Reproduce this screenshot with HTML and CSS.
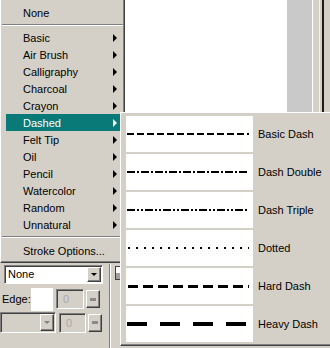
FILE: index.html
```html
<!DOCTYPE html>
<html lang="en">

<head>
  <meta charset="UTF-8">
  <meta name="viewport" content="width=device-width, initial-scale=1.0">
  <title>Stroke menu</title>
  <link rel="stylesheet" href="styles.css">
</head>

<body>
  <div class="screen">
    <div class="stage">
      <div class="stage-left"></div>
      <div class="canvas"></div>
      <div class="pasteboard"></div>
      <div class="rail">
        <span class="rail-edge"></span>
        <span class="rail-face"></span>
        <span class="rail-hi"></span>
        <span class="rail-gap"></span>
        <span class="rail-dark"></span>
        <span class="rail-face"></span>
      </div>
    </div>

    <div class="panel">
      <div class="controls">
        <div class="ctl-row row-fill">
          <div class="select fill-select">
            <span class="select-text">None</span>
            <span class="drop"></span>
          </div>
        </div>
        <div class="ctl-row row-edge">
          <span class="ctl-label">Edge:</span>
          <span class="swatch"></span>
          <span class="num">0</span>
          <span class="spin"></span>
        </div>
        <div class="ctl-row row-texture">
          <div class="select texture-select disabled">
            <span class="select-text"></span>
            <span class="drop"></span>
          </div>
          <span class="num">0</span>
          <span class="spin"></span>
        </div>
      </div>
      <div class="groove"></div>
      <div class="thumb"></div>
    </div>

    <!-- stroke category menu -->
    <ul class="menu main-menu">
      <li class="item">None</li>
      <li class="sep"></li>
      <li class="item has-sub">Basic</li>
      <li class="item has-sub">Air Brush</li>
      <li class="item has-sub">Calligraphy</li>
      <li class="item has-sub">Charcoal</li>
      <li class="item has-sub">Crayon</li>
      <li class="item has-sub active">Dashed</li>
      <li class="item has-sub">Felt Tip</li>
      <li class="item has-sub">Oil</li>
      <li class="item has-sub">Pencil</li>
      <li class="item has-sub">Watercolor</li>
      <li class="item has-sub">Random</li>
      <li class="item has-sub">Unnatural</li>
      <li class="sep sep-low"></li>
      <li class="item">Stroke Options...</li>
    </ul>

    <!-- dashed submenu -->
    <ul class="menu submenu">
      <li class="stroke">
        <svg class="preview" width="127" height="36" shape-rendering="crispEdges">
          <line x1="1" y1="18" x2="123" y2="18" stroke="#000" stroke-width="2" stroke-dasharray="7 3"/>
        </svg>
        <span class="stroke-name">Basic Dash</span>
      </li>
      <li class="stroke">
        <svg class="preview" width="127" height="36" shape-rendering="crispEdges">
          <line x1="1" y1="18" x2="123" y2="18" stroke="#000" stroke-width="2" stroke-dasharray="8 2 2 2"/>
        </svg>
        <span class="stroke-name">Dash Double</span>
      </li>
      <li class="stroke">
        <svg class="preview" width="127" height="36" shape-rendering="crispEdges">
          <line x1="1" y1="18" x2="123" y2="18" stroke="#000" stroke-width="2" stroke-dasharray="8 2 2 2 2 2"/>
        </svg>
        <span class="stroke-name">Dash Triple</span>
      </li>
      <li class="stroke">
        <svg class="preview" width="127" height="36" shape-rendering="crispEdges">
          <line x1="2" y1="18" x2="123" y2="18" stroke="#000" stroke-width="2" stroke-dasharray="2 6"/>
        </svg>
        <span class="stroke-name">Dotted</span>
      </li>
      <li class="stroke">
        <svg class="preview" width="127" height="36" shape-rendering="crispEdges">
          <line x1="2" y1="18.5" x2="123" y2="18.5" stroke="#000" stroke-width="3" stroke-dasharray="10 5"/>
        </svg>
        <span class="stroke-name">Hard Dash</span>
      </li>
      <li class="stroke">
        <svg class="preview" width="127" height="36" shape-rendering="crispEdges">
          <line x1="1" y1="18" x2="123" y2="18" stroke="#000" stroke-width="4" stroke-dasharray="20 13"/>
        </svg>
        <span class="stroke-name">Heavy Dash</span>
      </li>
    </ul>
  </div>
</body>

</html>
```

FILE: styles.css
```css
html,
body {
  margin: 0;
  padding: 0;
}

body {
  width: 330px;
  height: 348px;
  overflow: hidden;
  background: #d4d0c8;
  font-family: "Liberation Sans", Arial, sans-serif;
  font-size: 11px;
  color: #000;
}

.screen {
  position: relative;
  width: 330px;
  height: 348px;
  overflow: hidden;
}

/* background window */

.stage {
  display: flex;
  height: 263px;
}

.stage-left {
  width: 125px;
}

.canvas {
  width: 162px;
  background: #fff;
}

.pasteboard {
  width: 25px;
  background: #c9c9c9;
}

.rail {
  display: flex;
  flex: 1;
}

.rail span {
  display: block;
}

.rail-edge {
  width: 1px;
  background: #fff;
}

.rail-face {
  width: 6px;
  background: #d4d0c8;
}

.rail-hi {
  width: 1px;
  background: #f4f2ee;
}

.rail-gap {
  width: 2px;
  background: #d4d0c8;
}

.rail-dark {
  width: 2px;
  background: #1c1c1c;
}

.panel {
  display: flex;
  height: 85px;
}

.controls {
  width: 109px;
  padding-top: 2px;
}

.ctl-row {
  display: flex;
  align-items: center;
}

.row-fill {
  padding-left: 4px;
}

.row-edge {
  margin-top: 3px;
  height: 24px;
}

.row-texture {
  margin-top: 1px;
  height: 21px;
}

.select {
  display: flex;
  align-items: stretch;
  box-sizing: border-box;
  padding: 1px;
  background: #fff;
  border: 1px solid;
  border-color: #808080 #fff #fff #808080;
  box-shadow: inset 1px 1px #404040;
}

.fill-select {
  width: 99px;
  height: 19px;
}

.texture-select {
  width: 56px;
  height: 21px;
}

.select.disabled {
  background: #d4d0c8;
}

.select-text {
  flex: 1;
  padding-left: 2px;
  line-height: 15px;
}

.drop {
  display: flex;
  align-items: center;
  justify-content: center;
  width: 14px;
  box-sizing: border-box;
  background: #d4d0c8;
  border: 1px solid;
  border-color: #fff #404040 #404040 #fff;
  box-shadow: inset -1px -1px #808080;
}

.drop::before {
  content: '';
  border-top: 3px solid #000;
  border-left: 3px solid transparent;
  border-right: 3px solid transparent;
}

.disabled .drop::before {
  border-top-color: #808080;
}

.ctl-label {
  width: 31px;
  padding-left: 2px;
  box-sizing: border-box;
}

.swatch {
  width: 22px;
  height: 23px;
  background: #fff;
}

.num {
  box-sizing: border-box;
  width: 28px;
  height: 20px;
  margin-left: 3px;
  padding-left: 6px;
  line-height: 18px;
  color: #a8a8a8;
  border: 1px solid;
  border-color: #808080 #fff #fff #808080;
  box-shadow: inset 1px 1px #404040;
}

.row-texture .num {
  margin-left: 3px;
  width: 27px;
}

.spin {
  display: flex;
  align-items: center;
  justify-content: center;
  box-sizing: border-box;
  width: 14px;
  height: 18px;
  margin-left: 2px;
  border: 1px solid;
  border-color: #fff #404040 #404040 #fff;
  box-shadow: inset -1px -1px #808080;
}

.spin::before {
  content: '';
  width: 6px;
  height: 3px;
  background: #8a8a8a;
}

.groove {
  width: 0;
  margin-top: 1px;
  border-left: 1px solid #808080;
  border-right: 1px solid #fff;
}

.thumb {
  box-sizing: border-box;
  width: 7px;
  height: 14px;
  margin: 3px 0 0 4px;
  border: 1px solid #404040;
  background: linear-gradient(#fff 50%, #a0a0a0 50%);
}

/* menus */

.menu {
  position: absolute;
  margin: 0;
  list-style: none;
  box-sizing: border-box;
  background: #d4d0c8;
}

.main-menu {
  left: 0;
  top: 0;
  width: 125px;
  height: 263px;
  padding: 4px 3px 0 5px;
  border-left: 1px solid #fff;
  border-right: 1px solid #404040;
  border-bottom: 1px solid #404040;
  box-shadow: inset -1px -1px #808080;
}

.main-menu .item {
  display: flex;
  align-items: center;
  height: 17px;
  padding-left: 17px;
  white-space: nowrap;
}

.main-menu .has-sub::after {
  content: '';
  margin-left: auto;
  margin-right: 4px;
  border-left: 4px solid #000;
  border-top: 4px solid transparent;
  border-bottom: 4px solid transparent;
}

.main-menu .active {
  background: #0a7a78;
  color: #fff;
}

.main-menu .active::after {
  border-left-color: #fff;
}

.sep {
  height: 8px;
  padding-top: 3px;
  box-sizing: border-box;
}

.sep::before {
  content: '';
  display: block;
  margin: 0 -2px 0 -4px;
  border-top: 1px solid #808080;
  border-bottom: 1px solid #fff;
}

.sep-low {
  height: 9px;
  padding-top: 3px;
}

.submenu {
  left: 120px;
  top: 112px;
  width: 214px;
  display: flex;
  flex-direction: column;
  gap: 2px;
  padding: 3px 0 3px 5px;
  border-top: 1px solid #fff;
  border-left: 1px solid #fff;
  border-bottom: 1px solid #404040;
  box-shadow: inset 0 -1px #808080;
}

.stroke {
  display: flex;
  align-items: center;
  height: 36px;
}

.preview {
  display: block;
  background: #fff;
}

.stroke-name {
  margin-left: 5px;
  white-space: nowrap;
}
```
